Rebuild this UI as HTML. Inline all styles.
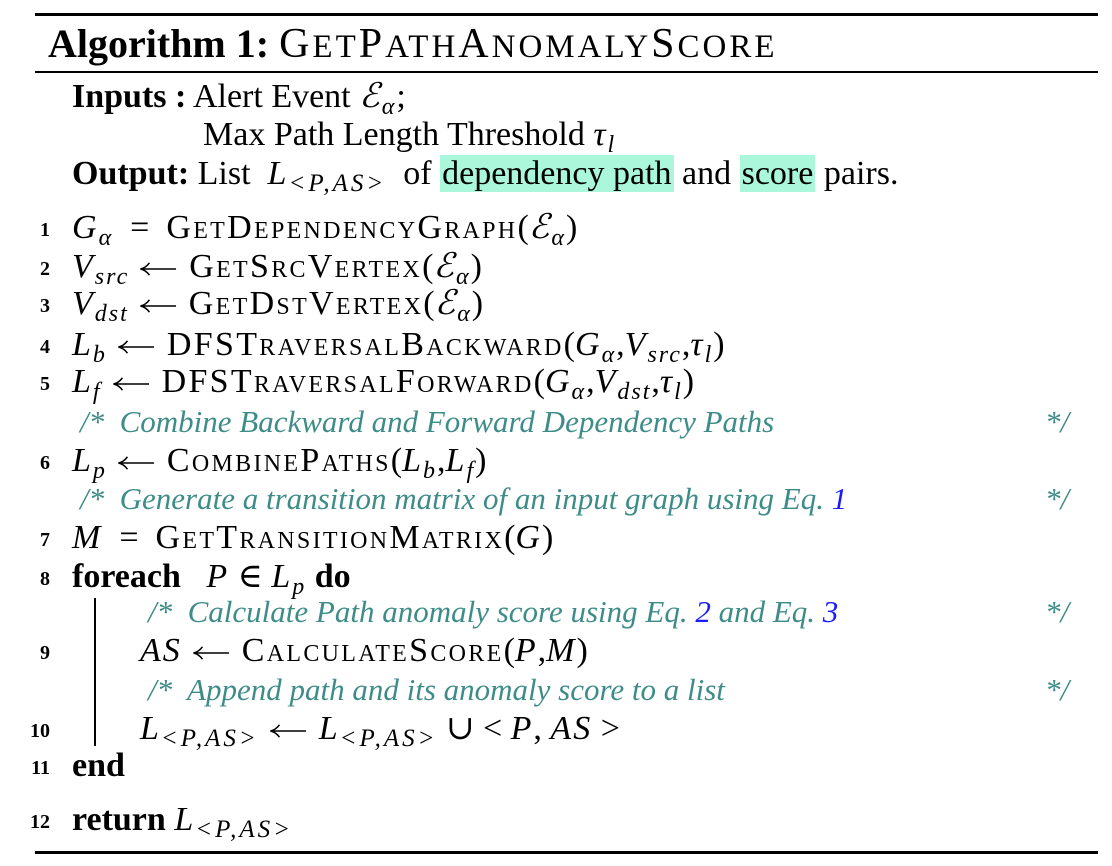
<!DOCTYPE html>
<html><head><meta charset="utf-8"><style>
body{margin:0;width:1112px;height:866px;background:#fff;position:relative;overflow:hidden;font-family:"Liberation Serif","DejaVu Serif",serif;color:#000}
.r{position:absolute;left:35px;width:1063px;background:#000}
.l{position:absolute;font-size:34px;line-height:30px;white-space:nowrap}
.n{position:absolute;font-size:20px;font-weight:bold;line-height:20px;width:22px;text-align:right;left:28px}
i{font-style:italic;letter-spacing:2px}
.sc{font-variant:small-caps;letter-spacing:2.3px}
.c{color:#3e8c88;font-style:italic;font-size:31px}
sub{font-size:24px;vertical-align:-7px;line-height:0;font-style:italic;letter-spacing:2px}
sub.w{font-size:25px;letter-spacing:3px}
.h{background:#aaf7db;padding:0 2px}
.b{color:#1a1aff}
.ar{display:inline-block;width:38px;height:16px;margin:0 12px 0 10px;vertical-align:0}
.t{font-size:42px;letter-spacing:3px}
.t s{text-decoration:none;font-size:33px}
</style></head><body>
<svg width="0" height="0" style="position:absolute"><defs><symbol id="a" viewBox="0 0 40 16"><path d="M2 8H39M11 1.5Q7 7 1.5 8Q7 9 11 14.5" fill="none" stroke="#000" stroke-width="1.6"/></symbol></defs></svg>
<div class="r" style="top:13px;height:3px"></div>
<div class="r" style="top:71px;height:2px"></div>
<div class="r" style="top:851px;height:3px"></div>
<div class="l" style="left:48px;top:24px;font-size:40px;line-height:40px"><b>Algorithm 1:</b> <span class="t">G<s>ET</s>P<s>ATH</s>A<s>NOMALY</s>S<s>CORE</s></span></div>
<div class="l" style="left:72px;top:82px"><b>Inputs :</b> Alert Event <i>ℰ</i><sub>α</sub>;</div>
<div class="l" style="left:203px;top:120px">Max Path Length Threshold <i>τ</i><sub>l</sub></div>
<div class="l" style="left:72px;top:159px"><b>Output:</b> List&nbsp; <i>L</i><sub class="w">&lt;P,AS&gt;</sub>&nbsp; of <span class="h">dependency path</span> and <span class="h">score</span> pairs.</div>

<div class="n" style="top:220px">1</div><div class="l" style="left:72px;top:213px"><i>G</i><sub>α</sub> &nbsp;= &nbsp;<span class="sc">GetDependencyGraph</span>(<i>ℰ</i><sub>α</sub>)</div>
<div class="n" style="top:259px">2</div><div class="l" style="left:72px;top:252px"><i>V</i><sub>src</sub><svg class="ar"><use href="#a"/></svg><span class="sc">GetSrcVertex</span>(<i>ℰ</i><sub>α</sub>)</div>
<div class="n" style="top:296px">3</div><div class="l" style="left:72px;top:289px"><i>V</i><sub>dst</sub><svg class="ar"><use href="#a"/></svg><span class="sc">GetDstVertex</span>(<i>ℰ</i><sub>α</sub>)</div>
<div class="n" style="top:337px">4</div><div class="l" style="left:72px;top:330px"><i>L</i><sub>b</sub><svg class="ar"><use href="#a"/></svg><span class="sc">DFSTraversalBackward</span>(<i>G</i><sub>α</sub>,<i>V</i><sub>src</sub>,<i>τ</i><sub>l</sub>)</div>
<div class="n" style="top:374px">5</div><div class="l" style="left:72px;top:367px"><i>L</i><sub>f</sub><svg class="ar"><use href="#a"/></svg><span class="sc">DFSTraversalForward</span>(<i>G</i><sub>α</sub>,<i>V</i><sub>dst</sub>,<i>τ</i><sub>l</sub>)</div>
<div class="l c" style="left:80px;top:407px">/*&nbsp; Combine Backward and Forward Dependency Paths</div><div class="l c" style="left:1045px;top:407px">*/</div>
<div class="n" style="top:453px">6</div><div class="l" style="left:72px;top:446px"><i>L</i><sub>p</sub><svg class="ar"><use href="#a"/></svg><span class="sc">CombinePaths</span>(<i>L</i><sub>b</sub>,<i>L</i><sub>f</sub>)</div>
<div class="l c" style="left:80px;top:484px">/*&nbsp; Generate a transition matrix of an input graph using Eq. <span class="b">1</span></div><div class="l c" style="left:1045px;top:484px">*/</div>
<div class="n" style="top:530px">7</div><div class="l" style="left:72px;top:523px"><i>M</i> &nbsp;= &nbsp;<span class="sc">GetTransitionMatrix</span>(<i>G</i>)</div>
<div class="n" style="top:569px">8</div><div class="l" style="left:72px;top:562px"><b>foreach</b>&nbsp;&nbsp; <i>P</i> ∈ <i>L</i><sub>p</sub> <b>do</b></div>
<div style="position:absolute;left:94px;top:598px;width:2px;height:148px;background:#000"></div>
<div class="l c" style="left:148px;top:597px">/*&nbsp; Calculate Path anomaly score using Eq. <span class="b">2</span> and Eq. <span class="b">3</span></div><div class="l c" style="left:1045px;top:597px">*/</div>
<div class="n" style="top:643px">9</div><div class="l" style="left:140px;top:636px"><i>AS</i><svg class="ar"><use href="#a"/></svg><span class="sc">CalculateScore</span>(<i>P</i>,<i>M</i>)</div>
<div class="l c" style="left:148px;top:675px">/*&nbsp; Append path and its anomaly score to a list</div><div class="l c" style="left:1045px;top:675px">*/</div>
<div class="n" style="top:721px">10</div><div class="l" style="left:140px;top:714px"><i>L</i><sub class="w">&lt;P,AS&gt;</sub><svg class="ar"><use href="#a"/></svg><i>L</i><sub class="w">&lt;P,AS&gt;</sub> ∪ &lt; <i>P</i>, <i>AS</i> &gt;</div>
<div class="n" style="top:758px">11</div><div class="l" style="left:72px;top:751px"><b>end</b></div>
<div class="n" style="top:812px">12</div><div class="l" style="left:72px;top:805px"><b>return</b> <i>L</i><sub class="w">&lt;P,AS&gt;</sub></div>
</body></html>
